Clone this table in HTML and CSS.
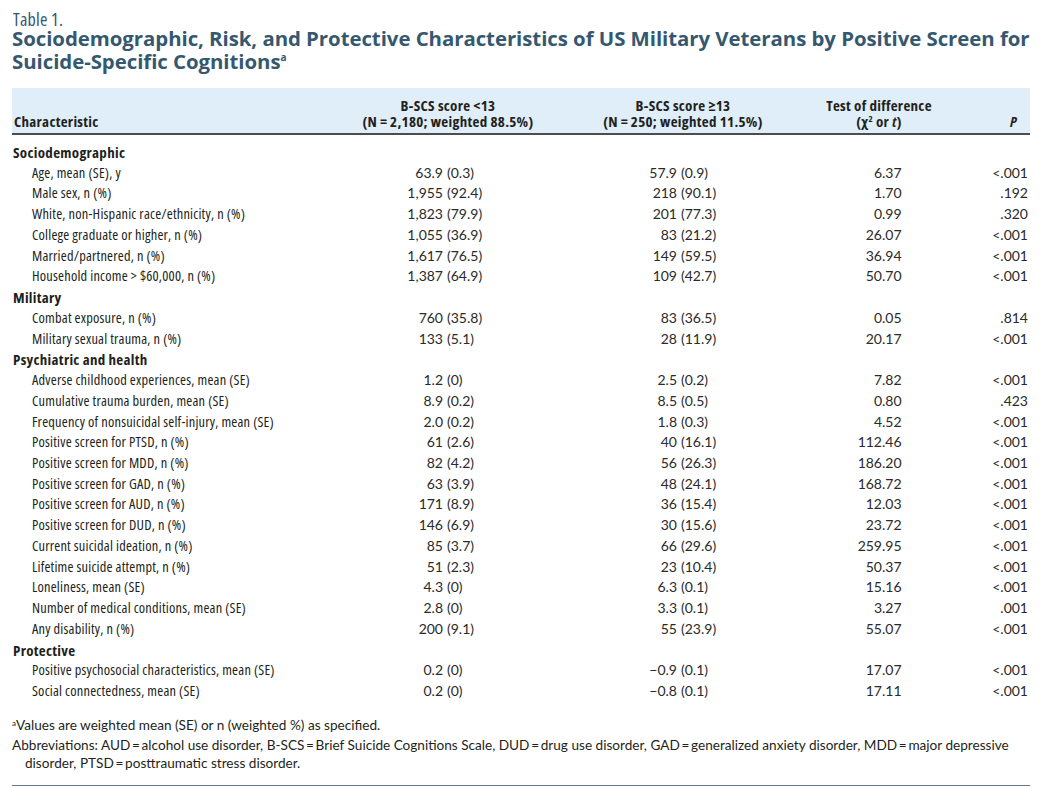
FILE: index.html
```html
<!DOCTYPE html>
<html lang="en">
<head>
<meta charset="utf-8">
<title>Table 1</title>
<link rel="stylesheet" href="styles.css">
</head>
<body>
<div class="page">
  <div class="label">Table 1.</div>
  <h1 class="title">Sociodemographic, Risk, and Protective Characteristics of US Military Veterans by Positive Screen for<br>Suicide-Specific Cognitions<sup>a</sup></h1>
  <table class="data">
    <colgroup>
      <col class="c1"><col class="c2"><col class="c3"><col class="c4"><col class="c5">
    </colgroup>
    <thead>
      <tr>
        <th class="h-char">Characteristic</th>
        <th class="h-mid">B-SCS score &lt;13<br>(N&#8201;=&#8201;2,180; weighted 88.5%)</th>
        <th class="h-mid">B-SCS score ≥13<br>(N&#8201;=&#8201;250; weighted 11.5%)</th>
        <th class="h-mid">Test of difference<br>(χ<sup>2</sup> or <i>t</i>)</th>
        <th class="h-p"><i>P</i></th>
      </tr>
    </thead>
    <tbody>
      <tr class="sec first"><td colspan="5">Sociodemographic</td></tr>
      <tr><td class="lab">Age, mean (SE), y</td><td class="v2"><span class="a">63.9</span><span class="b">(0.3)</span></td><td class="v3"><span class="a">57.9</span><span class="b">(0.9)</span></td><td class="v4"><span class="a">6</span><span class="b">.37</span></td><td class="vp">&lt;.001</td></tr>
      <tr><td class="lab">Male sex, n (%)</td><td class="v2"><span class="a">1,955</span><span class="b">(92.4)</span></td><td class="v3"><span class="a">218</span><span class="b">(90.1)</span></td><td class="v4"><span class="a">1</span><span class="b">.70</span></td><td class="vp">.192</td></tr>
      <tr><td class="lab">White, non-Hispanic race/ethnicity, n (%)</td><td class="v2"><span class="a">1,823</span><span class="b">(79.9)</span></td><td class="v3"><span class="a">201</span><span class="b">(77.3)</span></td><td class="v4"><span class="a">0</span><span class="b">.99</span></td><td class="vp">.320</td></tr>
      <tr><td class="lab">College graduate or higher, n (%)</td><td class="v2"><span class="a">1,055</span><span class="b">(36.9)</span></td><td class="v3"><span class="a">83</span><span class="b">(21.2)</span></td><td class="v4"><span class="a">26</span><span class="b">.07</span></td><td class="vp">&lt;.001</td></tr>
      <tr><td class="lab">Married/partnered, n (%)</td><td class="v2"><span class="a">1,617</span><span class="b">(76.5)</span></td><td class="v3"><span class="a">149</span><span class="b">(59.5)</span></td><td class="v4"><span class="a">36</span><span class="b">.94</span></td><td class="vp">&lt;.001</td></tr>
      <tr><td class="lab">Household income &gt; $60,000, n (%)</td><td class="v2"><span class="a">1,387</span><span class="b">(64.9)</span></td><td class="v3"><span class="a">109</span><span class="b">(42.7)</span></td><td class="v4"><span class="a">50</span><span class="b">.70</span></td><td class="vp">&lt;.001</td></tr>
      <tr class="sec"><td colspan="5">Military</td></tr>
      <tr><td class="lab">Combat exposure, n (%)</td><td class="v2"><span class="a">760</span><span class="b">(35.8)</span></td><td class="v3"><span class="a">83</span><span class="b">(36.5)</span></td><td class="v4"><span class="a">0</span><span class="b">.05</span></td><td class="vp">.814</td></tr>
      <tr><td class="lab">Military sexual trauma, n (%)</td><td class="v2"><span class="a">133</span><span class="b">(5.1)</span></td><td class="v3"><span class="a">28</span><span class="b">(11.9)</span></td><td class="v4"><span class="a">20</span><span class="b">.17</span></td><td class="vp">&lt;.001</td></tr>
      <tr class="sec"><td colspan="5">Psychiatric and health</td></tr>
      <tr><td class="lab">Adverse childhood experiences, mean (SE)</td><td class="v2"><span class="a">1.2</span><span class="b">(0)</span></td><td class="v3"><span class="a">2.5</span><span class="b">(0.2)</span></td><td class="v4"><span class="a">7</span><span class="b">.82</span></td><td class="vp">&lt;.001</td></tr>
      <tr><td class="lab">Cumulative trauma burden, mean (SE)</td><td class="v2"><span class="a">8.9</span><span class="b">(0.2)</span></td><td class="v3"><span class="a">8.5</span><span class="b">(0.5)</span></td><td class="v4"><span class="a">0</span><span class="b">.80</span></td><td class="vp">.423</td></tr>
      <tr><td class="lab">Frequency of nonsuicidal self-injury, mean (SE)</td><td class="v2"><span class="a">2.0</span><span class="b">(0.2)</span></td><td class="v3"><span class="a">1.8</span><span class="b">(0.3)</span></td><td class="v4"><span class="a">4</span><span class="b">.52</span></td><td class="vp">&lt;.001</td></tr>
      <tr><td class="lab">Positive screen for PTSD, n (%)</td><td class="v2"><span class="a">61</span><span class="b">(2.6)</span></td><td class="v3"><span class="a">40</span><span class="b">(16.1)</span></td><td class="v4"><span class="a">112</span><span class="b">.46</span></td><td class="vp">&lt;.001</td></tr>
      <tr><td class="lab">Positive screen for MDD, n (%)</td><td class="v2"><span class="a">82</span><span class="b">(4.2)</span></td><td class="v3"><span class="a">56</span><span class="b">(26.3)</span></td><td class="v4"><span class="a">186</span><span class="b">.20</span></td><td class="vp">&lt;.001</td></tr>
      <tr><td class="lab">Positive screen for GAD, n (%)</td><td class="v2"><span class="a">63</span><span class="b">(3.9)</span></td><td class="v3"><span class="a">48</span><span class="b">(24.1)</span></td><td class="v4"><span class="a">168</span><span class="b">.72</span></td><td class="vp">&lt;.001</td></tr>
      <tr><td class="lab">Positive screen for AUD, n (%)</td><td class="v2"><span class="a">171</span><span class="b">(8.9)</span></td><td class="v3"><span class="a">36</span><span class="b">(15.4)</span></td><td class="v4"><span class="a">12</span><span class="b">.03</span></td><td class="vp">&lt;.001</td></tr>
      <tr><td class="lab">Positive screen for DUD, n (%)</td><td class="v2"><span class="a">146</span><span class="b">(6.9)</span></td><td class="v3"><span class="a">30</span><span class="b">(15.6)</span></td><td class="v4"><span class="a">23</span><span class="b">.72</span></td><td class="vp">&lt;.001</td></tr>
      <tr><td class="lab">Current suicidal ideation, n (%)</td><td class="v2"><span class="a">85</span><span class="b">(3.7)</span></td><td class="v3"><span class="a">66</span><span class="b">(29.6)</span></td><td class="v4"><span class="a">259</span><span class="b">.95</span></td><td class="vp">&lt;.001</td></tr>
      <tr><td class="lab">Lifetime suicide attempt, n (%)</td><td class="v2"><span class="a">51</span><span class="b">(2.3)</span></td><td class="v3"><span class="a">23</span><span class="b">(10.4)</span></td><td class="v4"><span class="a">50</span><span class="b">.37</span></td><td class="vp">&lt;.001</td></tr>
      <tr><td class="lab">Loneliness, mean (SE)</td><td class="v2"><span class="a">4.3</span><span class="b">(0)</span></td><td class="v3"><span class="a">6.3</span><span class="b">(0.1)</span></td><td class="v4"><span class="a">15</span><span class="b">.16</span></td><td class="vp">&lt;.001</td></tr>
      <tr><td class="lab">Number of medical conditions, mean (SE)</td><td class="v2"><span class="a">2.8</span><span class="b">(0)</span></td><td class="v3"><span class="a">3.3</span><span class="b">(0.1)</span></td><td class="v4"><span class="a">3</span><span class="b">.27</span></td><td class="vp">.001</td></tr>
      <tr><td class="lab">Any disability, n (%)</td><td class="v2"><span class="a">200</span><span class="b">(9.1)</span></td><td class="v3"><span class="a">55</span><span class="b">(23.9)</span></td><td class="v4"><span class="a">55</span><span class="b">.07</span></td><td class="vp">&lt;.001</td></tr>
      <tr class="sec"><td colspan="5">Protective</td></tr>
      <tr><td class="lab">Positive psychosocial characteristics, mean (SE)</td><td class="v2"><span class="a">0.2</span><span class="b">(0)</span></td><td class="v3"><span class="a">−0.9</span><span class="b">(0.1)</span></td><td class="v4"><span class="a">17</span><span class="b">.07</span></td><td class="vp">&lt;.001</td></tr>
      <tr><td class="lab">Social connectedness, mean (SE)</td><td class="v2"><span class="a">0.2</span><span class="b">(0)</span></td><td class="v3"><span class="a">−0.8</span><span class="b">(0.1)</span></td><td class="v4"><span class="a">17</span><span class="b">.11</span></td><td class="vp">&lt;.001</td></tr>
    </tbody>
  </table>
  <div class="notes">
    <p><sup>a</sup>Values are weighted mean (SE) or n (weighted %) as specified.</p>
    <p class="hang">Abbreviations: AUD&#8201;=&#8201;alcohol use disorder, B-SCS&#8201;=&#8201;Brief Suicide Cognitions Scale, DUD&#8201;=&#8201;drug use disorder, GAD&#8201;=&#8201;generalized anxiety disorder, MDD&#8201;=&#8201;major depressive disorder, PTSD&#8201;=&#8201;posttraumatic stress disorder.</p>
  </div>
</div>
</body>
</html>
```
FILE: styles.css
```css
html, body {
  margin: 0;
  padding: 0;
  background: #ffffff;
}

.page {
  width: 1018px;
  padding: 10px 0 0 12px;
  color: #231f20;
}

.label {
  font-family: "Open Sans", "DejaVu Sans Condensed", sans-serif;
  font-stretch: 75%;
  font-size: 18px;
  letter-spacing: 0.2px;
  line-height: 19px;
  color: #35586f;
  padding-left: 1px;
}

.title {
  margin: -2px 0 0 0;
  font-family: "Open Sans", Lato, sans-serif;
  font-weight: 700;
  font-size: 20.4px;
  line-height: 23px;
  color: #35586f;
  white-space: nowrap;
  letter-spacing: -0.05px;
}

.title sup {
  font-size: 10px;
  font-weight: 700;
  vertical-align: 8px;
  line-height: 0;
}

.data {
  margin-top: 15px;
  width: 1018px;
  table-layout: fixed;
  border-collapse: collapse;
  border-spacing: 0;
}

.c1 { width: 321px; }
.c2 { width: 230px; }
.c3 { width: 240px; }
.c4 { width: 152px; }
.c5 { width: 75px; }

.data thead tr {
  background: #dfeef8;
}

.data th {
  font-family: "Open Sans", "DejaVu Sans Condensed", sans-serif;
  font-stretch: 75%;
  font-weight: 700;
  font-size: 15px;
  letter-spacing: 0.3px;
  line-height: 16px;
  padding: 9px 0 4px 0;
  vertical-align: bottom;
  border-bottom: 2px solid #4d4d4d;
  color: #231f20;
}

.data th sup {
  font-size: 9px;
  vertical-align: 5px;
  line-height: 0;
}

.h-char {
  text-align: left;
  padding-left: 2px !important;
}

.h-mid {
  text-align: center;
}

.h-p {
  text-align: right;
  padding-right: 13px !important;
}

.data td {
  padding: 0;
  height: 20.73px;
  line-height: 20.73px;
  white-space: nowrap;
  font-family: Lato, "Open Sans", sans-serif;
  font-size: 14px;
  color: #2a2a2a;
}

.data .sec td {
  font-family: "Open Sans", "DejaVu Sans Condensed", sans-serif;
  font-stretch: 75%;
  font-weight: 700;
  font-size: 15px;
  letter-spacing: 0.3px;
  color: #231f20;
  padding-left: 1px;
}

.data .first td {
  padding-top: 7px;
}

.data td.lab {
  font-family: "Open Sans", "DejaVu Sans Condensed", sans-serif;
  font-stretch: 75%;
  font-size: 14.4px;
  letter-spacing: 0.2px;
  color: #231f20;
  padding-left: 20px;
}

.data td .a,
.data td .b {
  display: inline-block;
}

.v2 { padding-right: 6px !important; }
.v3 { padding-right: 8px !important; }
.v4 { padding-left: 6px !important; }

.v2 .a, .v3 .a {
  width: calc(50% - 2px);
  text-align: right;
}

.v2 .b, .v3 .b {
  width: calc(50% - 2px);
  margin-left: 4px;
  text-align: left;
}

.v4 .a {
  width: 50%;
  text-align: right;
}

.v4 .b {
  width: 50%;
  text-align: left;
}

.vp {
  text-align: right;
  padding-right: 2px !important;
}

.notes {
  margin-top: 14px;
  padding-bottom: 13px;
  border-bottom: 1px solid #5f7b8e;
  font-family: Lato, "Open Sans", sans-serif;
  font-size: 13.6px;
  line-height: 18px;
  color: #231f20;
}

.notes p {
  margin: 0 0 2px 0;
}

.notes sup {
  font-size: 8px;
  vertical-align: 4px;
  line-height: 0;
}

.notes .hang {
  padding-left: 13px;
  text-indent: -13px;
  margin-bottom: 0;
}
```
